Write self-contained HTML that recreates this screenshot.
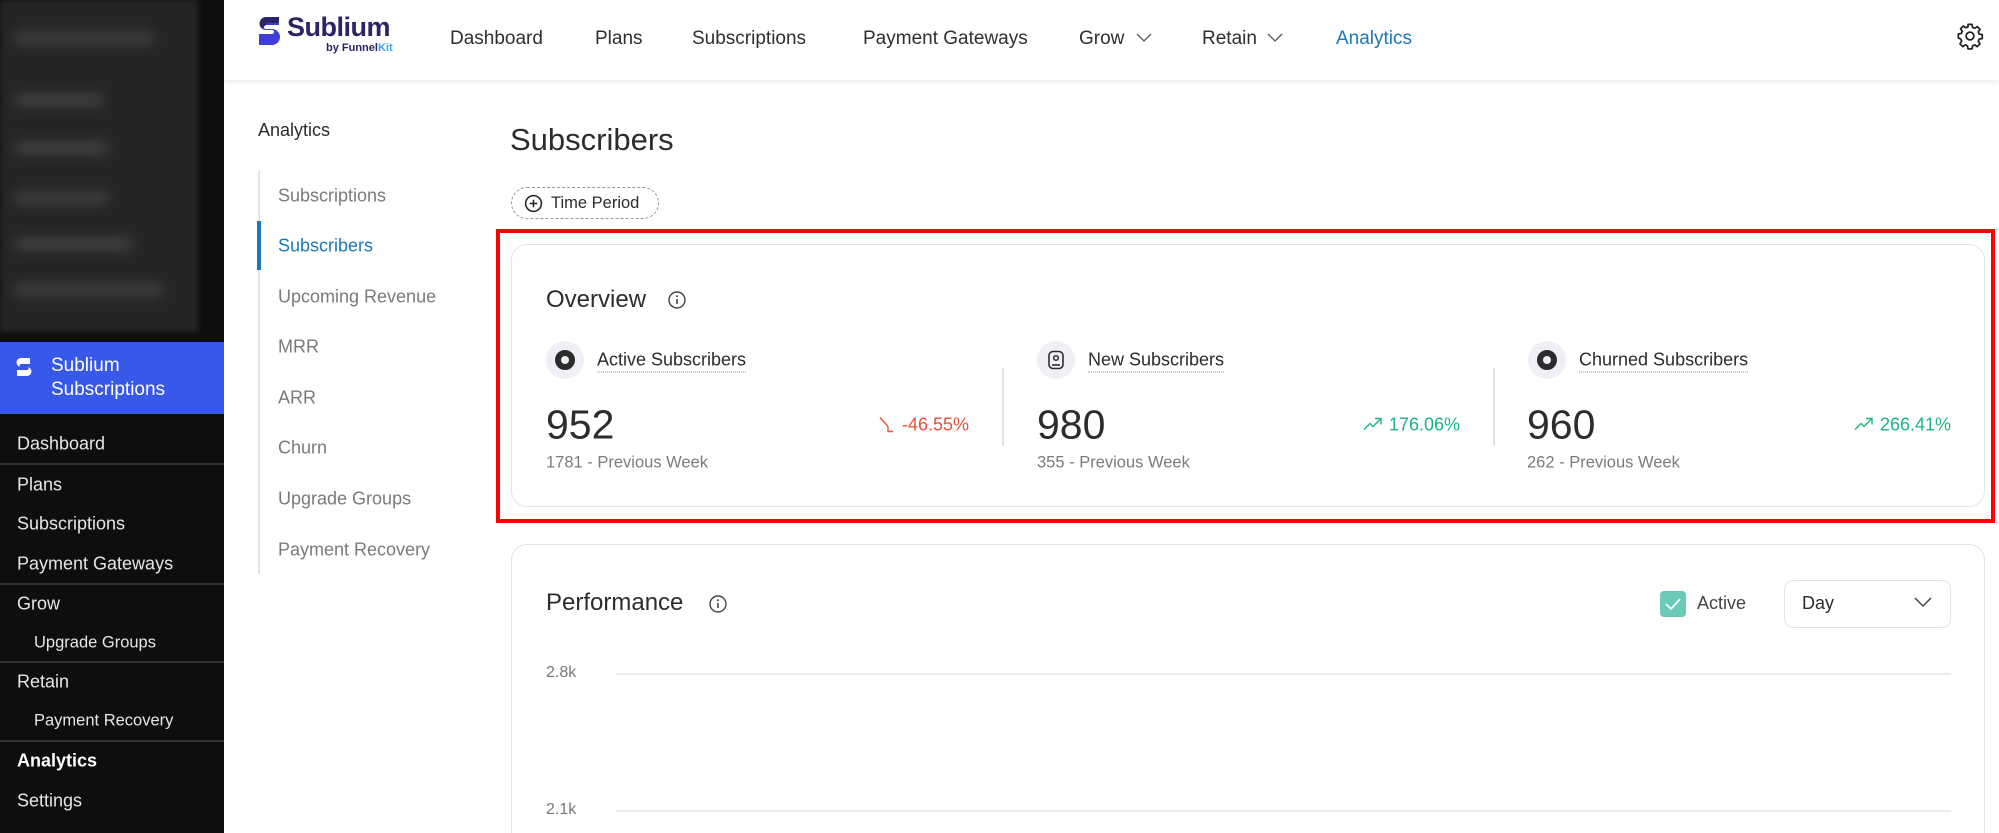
<!DOCTYPE html>
<html style="height:833px;overflow:hidden"><head><meta charset="utf-8"><style>
*{margin:0;padding:0;box-sizing:border-box}
body{width:1999px;height:833px;overflow:hidden;background:#fff;font-family:"Liberation Sans",Arial,sans-serif;color:#2c2c2c}
#w{position:relative;width:1999px;height:833px;overflow:hidden}
.a{position:absolute;white-space:nowrap}
.side{position:absolute;left:0;top:0;width:224px;height:833px;background:#0e0e0e}
.blur{position:absolute;left:0;top:0;width:198px;height:332px;background:#252525;filter:blur(3px)}
.blur i{position:absolute;height:16px;background:#3a3a3a;border-radius:8px;filter:blur(4px)}
.sm{color:#e6e6e6;font-size:18px;transform:translateY(-50%)}
.sep{position:absolute;left:0;width:224px;height:2px;background:#2e3338}
.nav{font-size:19px;color:#2f2f2f;transform:translateY(-50%)}
.sub{font-size:18px;color:#7a7a7a;transform:translateY(-50%);left:278px}
.card{position:absolute;border:1.5px solid #e3e3ea;border-radius:16px;background:#fff}
.lbl{font-size:18px;color:#2c2c2c;border-bottom:1.5px dotted #999;padding-bottom:1px;transform:translateY(-50%)}
.num{font-size:41px;color:#2c2c2c;transform:translateY(-50%)}
.prev{font-size:16.5px;color:#7b7b7b;transform:translateY(-50%)}
.pct{font-size:18px;transform:translateY(-50%)}
.ic{position:absolute;width:38px;height:38px;border-radius:50%;background:#eef0f6;transform:translate(-50%,-50%)}
.ring{position:absolute;left:9px;top:9px;width:20px;height:20px;border-radius:50%;border:6px solid #2c2c2c}
</style></head><body><div id="w">
<div class="side">
  <div class="blur">
    <i style="left:14px;top:30px;width:140px"></i>
    <i style="left:14px;top:92px;width:90px"></i>
    <i style="left:14px;top:140px;width:95px"></i>
    <i style="left:14px;top:190px;width:95px"></i>
    <i style="left:14px;top:236px;width:120px"></i>
    <i style="left:14px;top:282px;width:150px"></i>
  </div>
  <div class="a" style="left:0;top:342px;width:224px;height:72px;background:#3858e9"></div>
  <svg class="a" style="left:14px;top:356px" width="20" height="24" viewBox="0 0 20 24"><path d="M16 2H7a4.5 4.5 0 0 0 0 9h6a1.5 1.5 0 0 1 0 3H3v6h10a4.5 4.5 0 0 0 0-9H7a1.5 1.5 0 0 1 0-3h9z" fill="#fff"/></svg>
  <div class="a" style="left:51px;top:354px;color:#fff;font-size:19px;line-height:24px">Sublium<br>Subscriptions</div>
  <div class="a sm" style="left:17px;top:444px">Dashboard</div>
  <div class="sep" style="top:463px"></div>
  <div class="a sm" style="left:17px;top:485px">Plans</div>
  <div class="a sm" style="left:17px;top:524px">Subscriptions</div>
  <div class="a sm" style="left:17px;top:564px">Payment Gateways</div>
  <div class="sep" style="top:583px"></div>
  <div class="a sm" style="left:17px;top:604px">Grow</div>
  <div class="a sm" style="left:34px;top:643px;font-size:16.5px">Upgrade Groups</div>
  <div class="sep" style="top:661px"></div>
  <div class="a sm" style="left:17px;top:682px">Retain</div>
  <div class="a sm" style="left:34px;top:721px;font-size:16.5px">Payment Recovery</div>
  <div class="sep" style="top:740px"></div>
  <div class="a sm" style="left:17px;top:761px;font-weight:bold;color:#fff">Analytics</div>
  <div class="a sm" style="left:17px;top:801px">Settings</div>
</div>
<div class="a" style="left:224px;top:0;width:1775px;height:80px;background:#fff;box-shadow:0 2px 5px rgba(0,0,0,.08)"></div>
<svg class="a" style="left:256px;top:15px" width="26" height="32" viewBox="0 0 26 32"><path d="M23 2H10a6.5 6.5 0 0 0 0 13h6a2 2 0 0 1 0 4H3v11h13a8 8 0 0 0 0-16h-6a2 2 0 0 1 0-4h13z" fill="#3d3fd6"/><path d="M23 2H10a6.5 6.5 0 0 0-4 11.5L12 8h11z" fill="#2b2566"/></svg>
<div class="a" style="left:287px;top:12px;font-size:27px;font-weight:bold;color:#2b2566;letter-spacing:-.5px">Sublium</div>
<div class="a" style="left:326px;top:42px;font-size:11px;font-weight:bold;color:#2b2566">by Funnel<span style="color:#3aa0f0">Kit</span></div>
<div class="a nav" style="left:450px;top:39px">Dashboard</div>
<div class="a nav" style="left:595px;top:39px">Plans</div>
<div class="a nav" style="left:692px;top:39px">Subscriptions</div>
<div class="a nav" style="left:863px;top:39px">Payment Gateways</div>
<div class="a nav" style="left:1079px;top:39px">Grow</div>
<svg class="a" style="left:1136px;top:33px" width="16" height="10"><path d="M1 1l7 7 7-7" fill="none" stroke="#555" stroke-width="1.3"/></svg>
<div class="a nav" style="left:1202px;top:39px">Retain</div>
<svg class="a" style="left:1267px;top:33px" width="16" height="10"><path d="M1 1l7 7 7-7" fill="none" stroke="#555" stroke-width="1.3"/></svg>
<div class="a nav" style="left:1336px;top:39px;color:#1a78b4">Analytics</div>
<svg class="a" style="left:1956px;top:22px" width="28" height="28" viewBox="0 0 24 24"><path d="M10.3 2h3.4l.5 2.6 1.8.8 2.2-1.5 2.4 2.4-1.5 2.2.8 1.8 2.6.5v3.4l-2.6.5-.8 1.8 1.5 2.2-2.4 2.4-2.2-1.5-1.8.8-.5 2.6h-3.4l-.5-2.6-1.8-.8-2.2 1.5-2.4-2.4 1.5-2.2-.8-1.8L2 13.7v-3.4l2.6-.5.8-1.8-1.5-2.2 2.4-2.4 2.2 1.5 1.8-.8z" fill="none" stroke="#222" stroke-width="1.5" stroke-linejoin="round"/><circle cx="12" cy="12" r="3.3" fill="none" stroke="#222" stroke-width="1.5"/></svg>
<div class="a" style="left:258px;top:120px;font-size:18px;color:#2c2c2c">Analytics</div>
<div class="a" style="left:258px;top:171px;width:2px;height:403px;background:#e4e4e8"></div>
<div class="a" style="left:257px;top:221px;width:4px;height:49px;background:#1a78b4"></div>
<div class="a sub" style="top:196px">Subscriptions</div>
<div class="a sub" style="top:246px;color:#1a78b4">Subscribers</div>
<div class="a sub" style="top:297px">Upcoming Revenue</div>
<div class="a sub" style="top:347px">MRR</div>
<div class="a sub" style="top:398px">ARR</div>
<div class="a sub" style="top:448px">Churn</div>
<div class="a sub" style="top:499px">Upgrade Groups</div>
<div class="a sub" style="top:550px">Payment Recovery</div>
<div class="a" style="left:510px;top:122px;font-size:31px;color:#2c2c2c">Subscribers</div>
<div class="a" style="left:511px;top:187px;width:148px;height:32px;border:1.5px dashed #999;border-radius:16px"></div>
<svg class="a" style="left:524px;top:194px" width="19" height="19" viewBox="0 0 20 20"><circle cx="10" cy="10" r="8.3" fill="none" stroke="#222" stroke-width="1.6"/><path d="M10 6v8M6 10h8" stroke="#222" stroke-width="1.6"/></svg>
<div class="a" style="left:551px;top:194px;font-size:16.5px;color:#2c2c2c">Time Period</div>
<div class="a" style="left:496px;top:229px;width:1499px;height:294px;border:4px solid #f00"></div>
<div class="card" style="left:511px;top:244px;width:1474px;height:263px"></div>
<div class="a" style="left:546px;top:286px;font-size:24px;color:#2c2c2c">Overview</div>
<svg class="a" style="left:667px;top:290px" width="20" height="20" viewBox="0 0 20 20"><circle cx="10" cy="10" r="8" fill="none" stroke="#444" stroke-width="1.4"/><path d="M10 9v5" stroke="#444" stroke-width="1.6"/><circle cx="10" cy="6.2" r="1" fill="#444"/></svg>
<div class="ic" style="left:565px;top:360px"><div class="ring"></div></div>
<div class="a lbl" style="left:597px;top:361px">Active Subscribers</div>
<div class="ic" style="left:1056px;top:360px"><svg style="position:absolute;left:10px;top:9px" width="18" height="20" viewBox="0 0 18 20"><rect x="2" y="1.5" width="14" height="17" rx="4" fill="none" stroke="#2c2c2c" stroke-width="1.6"/><circle cx="9" cy="8" r="2.3" fill="none" stroke="#2c2c2c" stroke-width="1.5"/><path d="M5 15h8" stroke="#2c2c2c" stroke-width="1.6"/></svg></div>
<div class="a lbl" style="left:1088px;top:361px">New Subscribers</div>
<div class="ic" style="left:1547px;top:360px"><div class="ring"></div></div>
<div class="a lbl" style="left:1579px;top:361px">Churned Subscribers</div>
<div class="a" style="left:1002px;top:368px;width:1.5px;height:78px;background:#e2e2e6"></div>
<div class="a" style="left:1493px;top:368px;width:1.5px;height:78px;background:#e2e2e6"></div>
<div class="a num" style="left:546px;top:425px">952</div>
<div class="a num" style="left:1037px;top:425px">980</div>
<div class="a num" style="left:1527px;top:425px">960</div>
<div class="a prev" style="left:546px;top:463px">1781 - Previous Week</div>
<div class="a prev" style="left:1037px;top:463px">355 - Previous Week</div>
<div class="a prev" style="left:1527px;top:463px">262 - Previous Week</div>
<div class="a pct" style="right:1030px;top:425px;color:#e8503a"><svg width="16" height="18" viewBox="0 0 16 18" style="vertical-align:-3px;margin-right:8px"><path d="M2 2l8 9M10 11v5h5" fill="none" stroke="#e8503a" stroke-width="1.4"/></svg>-46.55%</div>
<div class="a pct" style="right:539px;top:425px;color:#1db38a"><svg width="20" height="14" viewBox="0 0 20 14" style="vertical-align:0;margin-right:6px"><path d="M1 13l6-6 3 3 8-8M12 2h6v6" fill="none" stroke="#1db38a" stroke-width="1.4"/></svg>176.06%</div>
<div class="a pct" style="right:48px;top:425px;color:#1db38a"><svg width="20" height="14" viewBox="0 0 20 14" style="vertical-align:0;margin-right:6px"><path d="M1 13l6-6 3 3 8-8M12 2h6v6" fill="none" stroke="#1db38a" stroke-width="1.4"/></svg>266.41%</div>
<div class="card" style="left:511px;top:544px;width:1474px;height:320px"></div>
<div class="a" style="left:546px;top:589px;font-size:24px;color:#2c2c2c">Performance</div>
<svg class="a" style="left:708px;top:594px" width="20" height="20" viewBox="0 0 20 20"><circle cx="10" cy="10" r="8" fill="none" stroke="#444" stroke-width="1.4"/><path d="M10 9v5" stroke="#444" stroke-width="1.6"/><circle cx="10" cy="6.2" r="1" fill="#444"/></svg>
<div class="a" style="left:1660px;top:591px;width:26px;height:26px;border-radius:4px;background:#6ccbb8"></div>
<svg class="a" style="left:1664px;top:596px" width="18" height="16"><path d="M2 8l5 5 9-10" fill="none" stroke="#fff" stroke-width="1.8"/></svg>
<div class="a" style="left:1697px;top:593px;font-size:18px;color:#444">Active</div>
<div class="a" style="left:1784px;top:580px;width:167px;height:48px;border:1.5px solid #e3e3ea;border-radius:9px"></div>
<div class="a" style="left:1802px;top:593px;font-size:18px;color:#2c2c2c">Day</div>
<svg class="a" style="left:1914px;top:597px" width="18" height="11"><path d="M1 1l8 8 8-8" fill="none" stroke="#444" stroke-width="1.5"/></svg>
<div class="a" style="left:546px;top:664px;font-size:16px;color:#777">2.8k</div>
<div class="a" style="left:616px;top:673px;width:1335px;height:1.5px;background:#ececf0"></div>
<div class="a" style="left:546px;top:801px;font-size:16px;color:#777">2.1k</div>
<div class="a" style="left:616px;top:810px;width:1335px;height:1.5px;background:#ececf0"></div>
</div></body></html>
